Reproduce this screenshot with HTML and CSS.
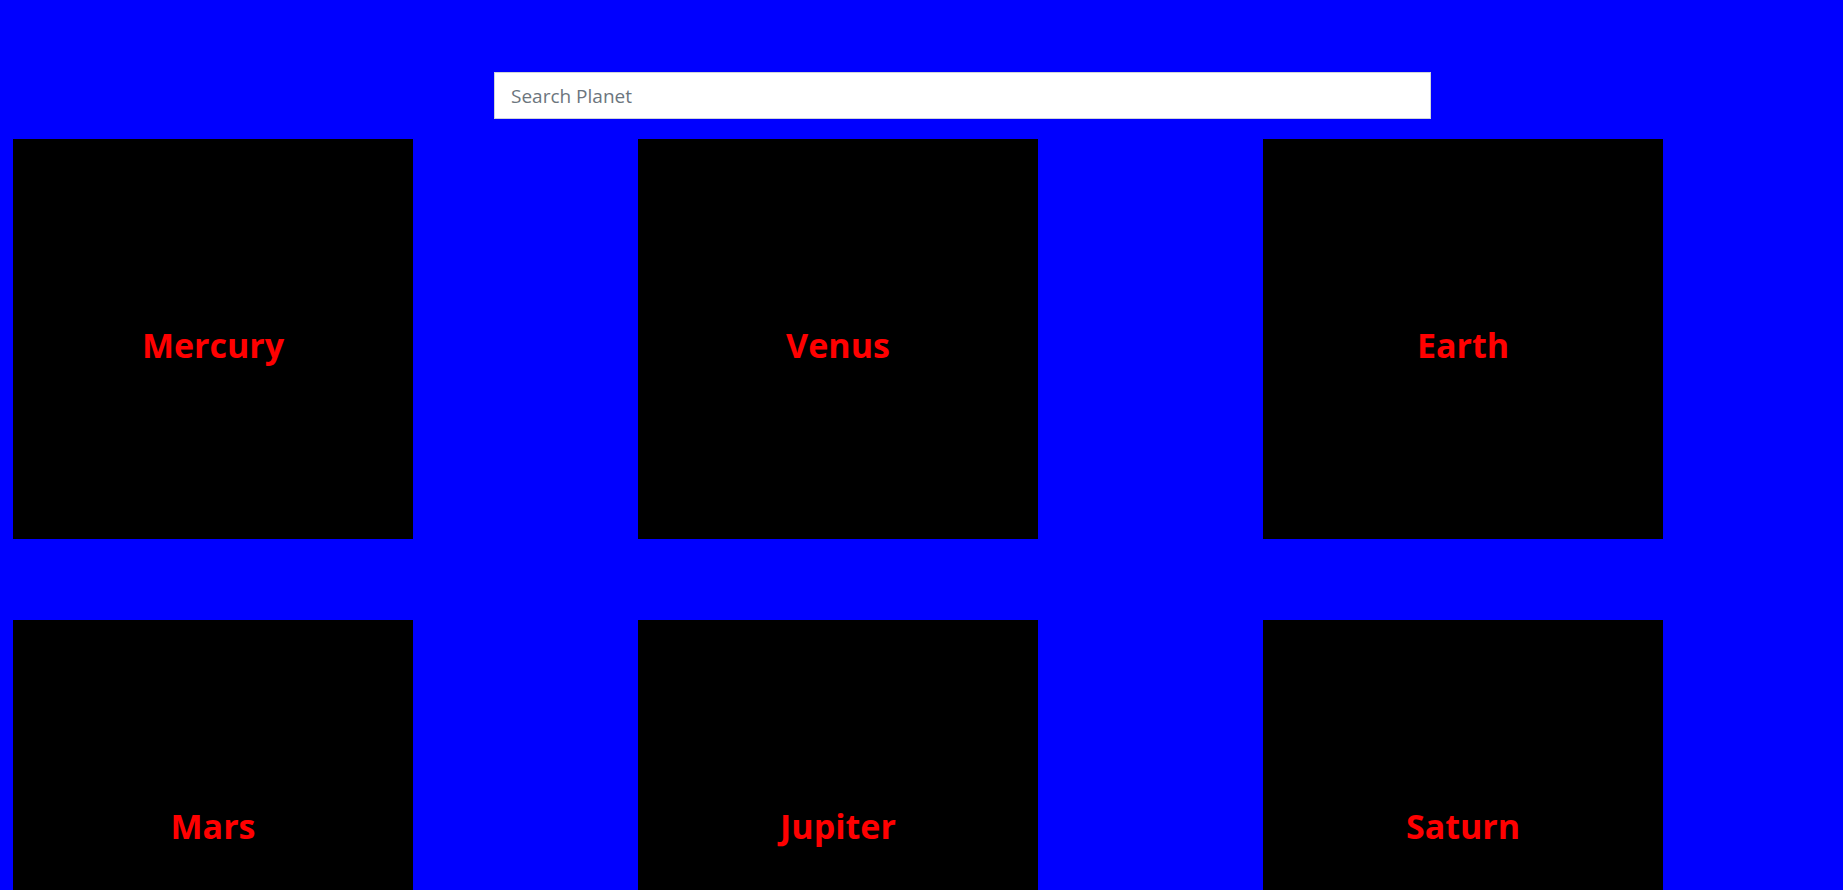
FILE: index.html
```html
<!DOCTYPE html>
<html>
<head>
<meta charset="utf-8">
<link rel="stylesheet" href="styles.css">
</head>
<body>
<div class="search-row">
  <input class="search" type="text" placeholder="Search Planet">
</div>
<div class="grid">
  <div class="card"><h2 class="name">Mercury</h2></div>
  <div class="card"><h2 class="name">Venus</h2></div>
  <div class="card"><h2 class="name">Earth</h2></div>
  <div class="card"><h2 class="name">Mars</h2></div>
  <div class="card"><h2 class="name">Jupiter</h2></div>
  <div class="card"><h2 class="name">Saturn</h2></div>
</div>
</body>
</html>
```
FILE: styles.css
```css
html, body {
  margin: 0;
  padding: 0;
  background: #0000ff;
  overflow: hidden;
  height: 890px;
}
body {
  font-family: "Open Sans", "Noto Sans", sans-serif;
}
.search-row {
  padding-top: 72px;
  padding-left: 494px;
}
.search {
  box-sizing: border-box;
  display: block;
  width: 937px;
  height: 47px;
  margin: 0;
  padding: 0 16px;
  border: 1px solid #ced4da;
  border-radius: 0;
  background: #fff;
  font-family: "Open Sans", "Noto Sans", sans-serif;
  font-size: 19px;
  color: #495057;
  outline: none;
}
.search::placeholder {
  color: #6c757d;
}
.grid {
  display: grid;
  grid-template-columns: repeat(3, 400px);
  column-gap: 225px;
  row-gap: 81px;
  padding-left: 13px;
  margin-top: 20px;
}
.card {
  width: 400px;
  height: 400px;
  background: #000;
  display: flex;
  align-items: center;
  justify-content: center;
  padding-top: 13px;
  box-sizing: border-box;
}
.name {
  margin: 0;
  color: #ff0000;
  font-size: 34px;
  font-weight: 700;
  line-height: 1.2;
}
```
